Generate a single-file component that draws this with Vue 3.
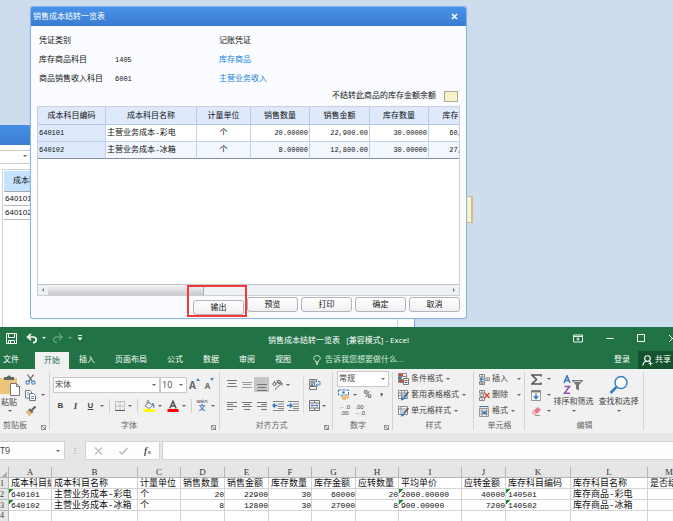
<script setup>
const formRows = [
  { label: '凭证类别', code: '', name: '记账凭证', link: false },
  { label: '库存商品科目', code: '1405', name: '库存商品', link: true },
  { label: '商品销售收入科目', code: '6001', name: '主营业务收入', link: true },
]
const costHeads = ['成本科目编码', '成本科目名称', '计量单位', '销售数量', '销售金额', '库存数量', '库存金额']
const costRows = [
  ['640101', '主营业务成本-彩电', '个', '20.00000', '22,900.00', '30.00000', '60,000.00'],
  ['640102', '主营业务成本-冰箱', '个', '8.00000', '12,800.00', '30.00000', '27,000.00'],
]
const actions = ['输出', '预览', '打印', '确定', '取消']
const tabs = ['文件', '开始', '插入', '页面布局', '公式', '数据', '审阅', '视图']
const letters = ['A', 'B', 'C', 'D', 'E', 'F', 'G', 'H', 'I', 'J', 'K', 'L', 'M']
const sheet = [
  ['成本科目编码', '成本科目名称', '计量单位', '销售数量', '销售金额', '库存数量', '库存金额', '应转数量', '平均单价', '应转金额', '库存科目编码', '库存科目名称', '是否结转'],
  ['640101', '主营业务成本-彩电', '个', '20', '22900', '30', '60000', '20', '2000.00000', '40000', '140501', '库存商品-彩电', ''],
  ['640102', '主营业务成本-冰箱', '个', '8', '12800', '30', '27000', '8', '900.00000', '7200', '140502', '库存商品-冰箱', ''],
  ['', '', '', '', '', '', '', '', '', '', '', '', ''],
]
const textNumber = (r, c) => (r === 1 || r === 2) && [0, 8, 10].includes(c)
const isNumber = (r, c) => r > 0 && [3, 4, 5, 6, 7, 9].includes(c)
</script>

<template>
  <div class="screen">
    <div class="desktop">
      <div class="note"></div>

      <section class="back-window">
        <div class="back-title"></div>
        <div class="back-combo"><i class="caret"></i></div>
        <div class="back-body">
          <table class="back-table">
            <thead><tr><th>成本科目编码</th></tr></thead>
            <tbody>
              <tr><td>640101</td></tr>
              <tr><td>640102</td></tr>
            </tbody>
          </table>
        </div>
      </section>

      <section class="dialog">
        <header class="dialog-title">
          <span>销售成本结转一览表</span>
          <button class="dialog-close" aria-label="关闭">
            <svg width="7" height="7" viewBox="0 0 7 7"><path d="M1 1l5 5M6 1l-5 5" stroke="#fff" stroke-width="1.6" /></svg>
          </button>
        </header>
        <div class="dialog-body">
          <div v-for="r in formRows" :key="r.label" class="form-row">
            <span>{{ r.label }}</span>
            <span class="code">{{ r.code }}</span>
            <a v-if="r.link" href="#">{{ r.name }}</a>
            <span v-else>{{ r.name }}</span>
          </div>
          <div class="legend"><span>不结转此商品的库存金额余额</span><i class="swatch"></i></div>
          <div class="grid-box">
            <div class="grid-view">
              <table class="cost">
                <colgroup>
                  <col class="w68" /><col class="w91" /><col class="w54" /><col class="w59" /><col class="w60" /><col class="w59" /><col class="w60" />
                </colgroup>
                <thead><tr><th v-for="h in costHeads" :key="h">{{ h }}</th></tr></thead>
                <tbody>
                  <tr v-for="row in costRows" :key="row[0]">
                    <td v-for="(c, i) in row" :key="i" :class="{ key: i === 0, mid: i === 2, num: i > 2 }">{{ c }}</td>
                  </tr>
                </tbody>
              </table>
            </div>
            <div class="scroll">
              <button aria-label="向左滚动"><i class="arrow left"></i></button>
              <div class="track"><div class="thumb"></div></div>
              <button aria-label="向右滚动"><i class="arrow right"></i></button>
            </div>
          </div>
          <footer class="actions">
            <button v-for="a in actions" :key="a" :class="{ lowered: a === '输出' }">{{ a }}</button>
          </footer>
        </div>
        <div class="highlight"></div>
      </section>
    </div>

    <section class="excel">
      <header class="bar">
        <div class="quick">
          <button aria-label="保存"><svg width="11" height="11" viewBox="0 0 11 11" fill="none" stroke="#fff"><path d="M0.500 0.500h10v10h-10zM2.500 0.500v4h6v-4M2.500 10.500V7.500h6v3M4.500 8v2.500" /></svg></button>
          <button aria-label="撤消"><svg width="12" height="11" viewBox="0 0 12 11" fill="none" stroke="#fff" stroke-width="1.6"><path d="M5 0.8L1.6 4 5 7.2M2 4h5c2 0 3.3 1 3.3 2.8S9 9.6 7 9.6" /></svg></button>
          <i class="caret light"></i>
          <button class="dim" aria-label="恢复"><svg width="12" height="11" viewBox="0 0 12 11" fill="none" stroke="#8fc0a3" stroke-width="1.3"><path d="M7 0.8L10.4 4 7 7.2M10 4H5C3 4 1.7 5 1.7 6.8S3 9.6 5 9.6" /></svg></button>
          <i class="caret light dim"></i>
          <button class="custom" aria-label="自定义"><svg width="6" height="6" viewBox="0 0 6 6"><path d="M1 0.5h4" stroke="#fff" /><path d="M0.5 2.5h5L3 5.5z" fill="#fff" /></svg></button>
        </div>
        <h1>销售成本结转一览表&nbsp;&nbsp; [兼容模式] - Excel</h1>
        <div class="controls">
          <button aria-label="功能区显示选项"><svg width="10" height="9" viewBox="0 0 10 9" fill="none" stroke="#fff"><path d="M0.5 1h9v7h-9zM0.5 2.5h9M5 7V4M3.5 5.2L5 3.8l1.5 1.4" stroke-width="0.9" /></svg></button>
          <button aria-label="最小化"><svg width="8" height="8" viewBox="0 0 8 8"><path d="M0.5 4.5h7" stroke="#fff" /></svg></button>
          <button aria-label="最大化"><svg width="8" height="8" viewBox="0 0 8 8"><path d="M0.5 0.5h7v7h-7z" fill="none" stroke="#fff" /></svg></button>
          <button aria-label="关闭"><svg width="9" height="9" viewBox="0 0 9 9"><path d="M1 1l7 7M8 1L1 8" stroke="#fff" /></svg></button>
        </div>
      </header>

      <nav class="tabs">
        <button v-for="t in tabs" :key="t" :class="{ file: t === '文件', active: t === '开始' }">{{ t }}</button>
        <button class="tell">
          <svg width="8" height="10" viewBox="0 0 8 10" fill="none" stroke="#e6f2ea" stroke-width="0.9"><path d="M2.7 7V6C1.5 5.200.8 4.300.8 3.300.8 1.700 2.200.6 4 .6s3.200 1.100 3.200 2.700c0 1-.7 1.900-1.900 2.700v1zM2.800 8.300h2.400M3.200 9.500h1.600" /></svg>
          告诉我您想要做什么...
        </button>
        <button class="login">登录</button>
        <button class="share">
          <svg width="11" height="11" viewBox="0 0 11 11" fill="none" stroke="#fff" stroke-width="1.1"><circle cx="5.500" cy="3.600" r="2.800" /><path d="M0.800 10.500c.2-2.200 1.500-3.700 3.200-4.200M7 6.300l1 .8M8.500 6.500v4M6.500 8.500h4" /></svg>
          共享
        </button>
      </nav>

      <div class="ribbon">
        <div class="group clip">
          <div class="tools">
            <button class="paste">
              <svg width="21" height="21" viewBox="0 0 21 21"><path d="M0 3h17v16H0z" fill="#edc47c" /><path d="M4 5V2h3c0-2 4-2 4 0h3v3z" fill="#666" /><path d="M10.500 8.500h6l3 3v9h-9z" fill="#fff" stroke="#777" /><path d="M16.500 8.500v3h3" fill="none" stroke="#777" /></svg>
              <span>粘贴</span><i class="caret"></i>
            </button>
            <div class="stack">
              <button aria-label="剪切"><svg width="11" height="11" viewBox="0 0 11 11" fill="none"><path d="M2.500 0.500l4.800 7M8.500 0.500l-4.800 7" stroke="#666" stroke-width="1.300" /><circle cx="2.600" cy="8.600" r="1.700" stroke="#4a86c5" stroke-width="1.100" /><circle cx="8.400" cy="8.600" r="1.700" stroke="#4a86c5" stroke-width="1.100" /></svg></button>
              <button aria-label="复制"><svg width="11" height="11" viewBox="0 0 11 11" fill="#fff" stroke="#777"><path d="M0.500 0.500h4.500l1.500 1.500v6h-6z" /><path d="M4.500 3.500h4l2 2v5h-6z" /><path d="M2 3h2M2 5h1.500M6 6.500h3M6 8.500h3" stroke="#4a86c5" stroke-width="0.900" /></svg><i class="caret"></i></button>
              <button aria-label="格式刷"><svg width="11" height="11" viewBox="0 0 11 11"><path d="M0.500 6l3-2.500L7 7 4.500 10.500z" fill="#edb96a" /><path d="M4 3l3.700 3.700" stroke="#666" stroke-width="2" /><path d="M6.500 4.500l4-4" stroke="#666" stroke-width="2.200" /></svg></button>
            </div>
          </div>
          <div class="caption"><span>剪贴板</span><i class="launch"></i></div>
        </div>

        <div class="group font">
          <div class="tools">
            <div class="line">
              <label class="pick face"><select aria-label="字体"><option>宋体</option></select><i class="caret"></i></label>
              <label class="pick size"><select aria-label="字号"><option>10</option></select><i class="caret"></i></label>
              <button class="grow" aria-label="增大字号"><b class="big">A</b><svg width="4" height="3" viewBox="0 0 4 3"><path d="M0 3l2-3 2 3z" fill="#4a86c5" /></svg></button>
              <button class="grow" aria-label="减小字号"><b>A</b><svg width="4" height="3" viewBox="0 0 4 3"><path d="M0 0l2 3 2-3z" fill="#4a86c5" /></svg></button>
            </div>
            <div class="line">
              <button class="t15"><b>B</b></button>
              <button class="t15"><b class="ital">I</b></button>
              <button class="t15"><b class="under">U</b></button>
              <i class="caret wide"></i><i class="sep"></i>
              <button class="t13" aria-label="边框"><svg width="10" height="10" viewBox="0 0 10 10" fill="none" stroke="#aaa"><path d="M0.500 0.500h9v9h-9zM5 0.500v9M0.500 5h9" stroke-dasharray="1.500 0.700" /><path d="M0 9.500h10" stroke="#555" /></svg></button>
              <i class="caret wide"></i><i class="sep"></i>
              <button class="t15" aria-label="填充颜色"><svg width="12" height="12" viewBox="0 0 12 12"><path d="M2 5.500l3.500-3.500 4 3.500-3.500 3z" fill="#fff" stroke="#777" /><path d="M4 4V1.200c0-1 2-1 2 0V4" fill="none" stroke="#777" stroke-width="0.800" /><path d="M9 3.500c2 .5 2 2 1.800 4.300" fill="none" stroke="#4a86c5" stroke-width="1.300" /><path d="M0.500 9h11v3h-11z" fill="#ff0" /></svg></button>
              <i class="caret wide"></i>
              <button class="t15" aria-label="字体颜色"><svg width="12" height="12" viewBox="0 0 12 12"><path d="M2.800 8.500L6 1.200l3.200 7.300M4 6h4" fill="none" stroke="#555" stroke-width="1.500" /><path d="M0.500 9h11v3h-11z" fill="#f00" /></svg></button>
              <i class="caret wide"></i><i class="sep"></i>
              <button class="t14 pinyin"><span>wén</span><b>文</b></button>
              <i class="caret wide"></i>
            </div>
          </div>
          <div class="caption"><span>字体</span><i class="launch"></i></div>
        </div>

        <div class="group align">
          <div class="tools">
            <div class="lines">
              <div class="line">
                <button class="t15" aria-label="顶端对齐"><svg width="10" height="12" viewBox="0 0 10 12" stroke="#777"><path d="M0 1.500h10M1 4.500h8M0 7.500h10" /></svg></button>
                <button class="t15" aria-label="垂直居中"><svg width="10" height="12" viewBox="0 0 10 12" stroke="#999"><path d="M0 3.500h10M1 5.500h8M0 8.500h10" /></svg></button>
                <button class="t15 on" aria-label="底端对齐"><svg width="10" height="12" viewBox="0 0 10 12" stroke="#777"><path d="M0 5.500h10M1 8.500h8M0 11.500h10" /></svg></button>
                <button class="t17" aria-label="方向"><svg width="11" height="11" viewBox="0 0 11 11" fill="none" stroke="#666"><circle cx="2.500" cy="5" r="1.600" /><path d="M2 2l3 3.500M4.500 1l3 3.500" /><circle cx="7" cy="3" r="1.500" /><path d="M3 10.500l7-6.500M7.500 4H10v2.500" /></svg></button>
                <i class="caret"></i>
              </div>
              <div class="line">
                <button class="t15" aria-label="左对齐"><svg width="10" height="8" viewBox="0 0 10 8" stroke="#777"><path d="M0 0.500h10M0 2.500h6M0 4.500h10M0 7.500h6" /></svg></button>
                <button class="t15" aria-label="居中"><svg width="10" height="8" viewBox="0 0 10 8" stroke="#777"><path d="M0 0.500h10M2 2.500h6M0 4.500h10M2 7.500h6" /></svg></button>
                <button class="t15" aria-label="右对齐"><svg width="10" height="8" viewBox="0 0 10 8" stroke="#777"><path d="M0 0.500h10M4 2.500h6M0 4.500h10M4 7.500h6" /></svg></button>
                <button class="t17" aria-label="减少缩进量"><svg width="12" height="10" viewBox="0 0 12 10"><path d="M1 0.500h11M6 3h6M6 5.500h6M1 9.500h11M6 7.500h6" stroke="#888" /><path d="M5.500 4.500H1M3 2.500L1 4.500l2 2" stroke="#3a78bd" stroke-width="1.400" fill="none" /></svg></button>
                <button class="t13" aria-label="增加缩进量"><svg width="12" height="10" viewBox="0 0 12 10"><path d="M1 0.500h11M6 3h6M6 5.500h6M1 9.500h11M6 7.500h6" stroke="#888" /><path d="M0 4.500h4.500M3 2.500l2 2-2 2" stroke="#3a78bd" stroke-width="1.400" fill="none" /></svg></button>
              </div>
            </div>
            <div class="lines side">
              <div class="line"><button class="t15" aria-label="自动换行"><svg width="12" height="11" viewBox="0 0 12 11" fill="none"><path d="M0.500 0.500h7v2.500h-7zM0.500 4h5v2.500h-5zM0.500 7.500h7v3h-7z" stroke="#777" /><path d="M2 2h4M2 5.500h2" stroke="#4a86c5" /><path d="M9 2.500h2v3.500H7M8.500 4.500L7 6l1.500 1.500" stroke="#4a86c5" /></svg></button></div>
              <div class="line"><button class="t15" aria-label="合并后居中"><svg width="11" height="11" viewBox="0 0 11 11" fill="none"><path d="M0.500 0.500h10v10h-10zM0.500 3h10M0.500 8h10M5.500 0.500V3M5.500 8v2.500" stroke="#777" /><path d="M2 5.500h7M3.500 4.300L2 5.500l1.500 1.200M7.500 4.300L9 5.500 7.500 6.700" stroke="#3a78bd" stroke-width="0.900" /></svg></button><i class="caret"></i></div>
            </div>
          </div>
          <div class="caption"><span>对齐方式</span><i class="launch"></i></div>
        </div>

        <div class="group number">
          <div class="tools">
            <label class="pick format"><select aria-label="数字格式"><option>常规</option></select><i class="caret"></i></label>
            <div class="line">
              <button class="t14" aria-label="会计数字格式"><svg width="12" height="11" viewBox="0 0 12 11"><path d="M0.500 1h10v5h-10z" fill="#fff" stroke="#3a78bd" stroke-dasharray="3 1" /><circle cx="5.500" cy="3.500" r="1.300" fill="#3a78bd" /><path d="M3 8h4M4 10h4M7 6.500h4M7 8.500h4" stroke="#e8b05c" stroke-width="1.300" /></svg></button>
              <i class="caret wide"></i>
              <button class="t15 pct">%</button>
              <button class="t13 comma">,</button>
            </div>
            <div class="line">
              <button class="t15 dec"><span><em>←</em>.0</span><span>.00</span></button>
              <button class="t15 dec"><span>.00</span><span><em>→</em>.0</span></button>
            </div>
          </div>
          <div class="caption"><span>数字</span><i class="launch"></i></div>
        </div>

        <div class="group rows">
          <div class="tools">
            <button><svg width="11" height="12" viewBox="0 0 11 12"><path d="M0.500 0.500h8v9h-8zM0.500 3.500h8M0.500 6.500h8M3.500 0.500v9" fill="#fff" stroke="#888" /><path d="M1 1h4v2H1z" fill="#d9452c" /><path d="M1 4h2v2H1z" fill="#3a78bd" /><path d="M1 7h4v2H1z" fill="#d9452c" /><path d="M5.500 5.500h5v6h-5z" fill="#fff" stroke="#777" /><path d="M6.500 7.500h3M6.500 9.500h3" stroke="#555" /></svg>条件格式<i class="caret"></i></button>
            <button><svg width="11" height="11" viewBox="0 0 11 11"><path d="M0.500 0.500h9v8h-9zM0.500 3h9M0.500 5.500h9M3.500 0.500v8M6.500 0.500v8" fill="#fff" stroke="#888" /><path d="M4 3h5.500v5H4z" fill="#9dc3e6" /><path d="M10.500 2L6 7.500" stroke="#555" stroke-width="1.500" /><path d="M2.500 10.500l1.500-3 2.500.5-1 2z" fill="#3a78bd" /></svg>套用表格格式<i class="caret"></i></button>
            <button><svg width="11" height="11" viewBox="0 0 11 11"><path d="M0.500 0.500h9v8h-9zM0.500 3h9M3 0.500v8" fill="#fff" stroke="#888" /><path d="M3.500 3.500h5v4h-5z" fill="#bcd6ef" /><path d="M10.500 2L6 7.500" stroke="#555" stroke-width="1.500" /><path d="M2.500 10.500l1.500-3 2.500.5-1 2z" fill="#3a78bd" /></svg>单元格样式<i class="caret"></i></button>
          </div>
          <div class="caption"><span>样式</span></div>
        </div>

        <div class="group rows cells">
          <div class="tools">
            <button><svg width="11" height="11" viewBox="0 0 11 11" fill="none"><path d="M0.500 0.500h5v2.500h-5zM3 0.500V3M0.500 7.500h5v3h-5zM3 7.500v3M0.500 9h5" stroke="#888" /><path d="M5.500 4h5v2.500h-5zM8 4v2.500" stroke="#888" /><path d="M5 5.200H1M2.700 3.600L1 5.200l1.700 1.600" stroke="#3a78bd" stroke-width="1.200" /></svg>插入<i class="caret far"></i></button>
            <button><svg width="11" height="11" viewBox="0 0 11 11" fill="none"><path d="M0.500 0.500h5v2.500h-5zM3 0.500V3M0.500 7.500h5v3h-5zM3 7.500v3M1 4h3.500v2.500H1z" stroke="#888" /><path d="M5.500 3l5 5M10.500 3l-5 5" stroke="#e0452c" stroke-width="1.400" /></svg>删除<i class="caret far"></i></button>
            <button><svg width="11" height="11" viewBox="0 0 11 11" fill="none"><path d="M0.500 2.500h9v8h-9zM3 2.500v8M7.500 2.500v8M0.500 5h9M0.500 8h9" stroke="#999" /><path d="M3.500 5.500h4v2.500h-4z" fill="#3a78bd" /><path d="M1 0.500h8M1 0v1.500M9 0v1.500" stroke="#3a78bd" /></svg>格式<i class="caret"></i></button>
          </div>
          <div class="caption"><span>单元格</span></div>
        </div>

        <div class="group edit">
          <div class="tools">
            <div class="stack">
              <button aria-label="自动求和"><svg width="11" height="11" viewBox="0 0 11 11"><path d="M10 2.500V1H1l4.500 4.500L1 10h9V8.500" fill="none" stroke="#555" stroke-width="1.600" /></svg><i class="caret"></i></button>
              <button aria-label="填充"><svg width="11" height="11" viewBox="0 0 11 11" fill="#fff"><path d="M0.500 0.500h9v10h-9z" stroke="#999" /><path d="M0.500 1.500h9" stroke="#777" stroke-width="2" /><path d="M5 3.500v5M2.700 6.300L5 8.600l2.300-2.300" fill="none" stroke="#3a78bd" stroke-width="1.500" /></svg><i class="caret"></i></button>
              <button aria-label="清除"><svg width="11" height="10" viewBox="0 0 11 10"><path d="M1 6l6-5 3 3-5.500 5H2.500z" fill="#e8798b" /><path d="M1 6l2-1.500L6 7.500 4.500 9H2.500z" fill="#f4b5bf" /><path d="M4 9.500h5" stroke="#999" /></svg><i class="caret"></i></button>
            </div>
            <button class="tall">
              <svg width="21" height="20" viewBox="0 0 21 20" fill="none"><path d="M1 8L4 0.800 7 8M2.200 5.500h3.600" stroke="#3a78bd" stroke-width="1.500" /><path d="M1.500 11.500h5L1.500 18.200H7" stroke="#9b4fb5" stroke-width="1.500" /><path d="M8.500 5h12l-4.500 5v5.500l-3-1.500v-4z" fill="#777" /><path d="M11 6.500h7" stroke="#ccc" /></svg>
              <span>排序和筛选</span><i class="caret"></i>
            </button>
            <button class="tall">
              <svg width="20" height="20" viewBox="0 0 20 20" fill="none"><circle cx="12" cy="7.500" r="6" fill="#fff" stroke="#3a7fc4" stroke-width="1.500" /><path d="M7.500 12L1.500 18" stroke="#3a7fc4" stroke-width="2.600" /></svg>
              <span>查找和选择</span><i class="caret"></i>
            </button>
          </div>
          <div class="caption"><span>编辑</span></div>
        </div>
      </div>

      <div class="formula">
        <label class="namebox"><input value="T9" aria-label="名称框" /><i class="caret"></i></label>
        <i class="dots">⋮</i>
        <div class="fx">
          <button aria-label="取消"><svg width="9" height="8" viewBox="0 0 9 8"><path d="M1 0.500l7 7M8 0.500l-7 7" stroke="#bbb" stroke-width="1.200" /></svg></button>
          <button aria-label="输入"><svg width="9" height="8" viewBox="0 0 9 8"><path d="M0.500 4.500l2.500 2.500L8.500 1" fill="none" stroke="#bbb" stroke-width="1.500" /></svg></button>
          <button class="fn">f<small>x</small></button>
        </div>
        <input class="entry" aria-label="编辑栏" />
      </div>

      <div class="sheet">
        <table>
          <colgroup>
            <col class="c9" /><col class="c43" /><col class="c86" /><col class="c43" /><col class="c44" /><col class="c44" /><col class="c43" /><col class="c44" /><col class="c43" /><col class="c63" /><col class="c44" /><col class="c65" /><col class="c77" /><col class="c43" />
          </colgroup>
          <thead>
            <tr><th><i class="corner"></i></th><th v-for="l in letters" :key="l">{{ l }}</th></tr>
          </thead>
          <tbody>
            <tr v-for="(row, r) in sheet" :key="r">
              <th>{{ r + 1 }}</th>
              <td v-for="(c, i) in row" :key="i" :class="{ num: isNumber(r, i), mark: textNumber(r, i) }">{{ c }}</td>
            </tr>
          </tbody>
        </table>
      </div>
    </section>
  </div>
</template>

<style>
body { margin: 0; }
</style>

<style scoped>
* { box-sizing: border-box; }
.screen {
  display: flex; flex-direction: column; height: 100vh; overflow: hidden;
  background: #cedded; color: #111; font: 8px/12px "Liberation Sans", "Noto Sans CJK SC", sans-serif;
}
button, input, select { font: inherit; color: inherit; border: 0; padding: 0; margin: 0; background: none; border-radius: 0; min-width: 0; }
button { display: flex; align-items: center; justify-content: center; white-space: nowrap; }
svg { display: block; flex: none; }
table { border-collapse: separate; border-spacing: 0; table-layout: fixed; }
th { font-weight: normal; }
.caret { flex: none; width: 0; height: 0; border: 2px solid transparent; border-top-color: #666; border-bottom: 0; }
.caret.light { border-top-color: #fff; }
.caret.wide { margin: 0 3px 0 2px; }

.desktop { position: relative; flex: none; height: 327px; overflow: hidden; }
.note { position: absolute; left: 440px; top: 196px; width: 33px; height: 27px; background: #fdf1c6; border: 1px solid #cdbd94; border-right-width: 2px; }

.back-window { position: absolute; left: 0; top: 125px; width: 415px; height: 202px; background: #fff; border-right: 1px solid #77a7e0; }
.back-title { height: 20px; background: linear-gradient(#468fe4, #3a7dd2); }
.back-combo { margin-top: 5px; height: 14px; border: solid #ccc; border-width: 1px 0; padding: 5px 0 0 23px; }
.back-body { margin: 5px 16px 0 2px; border: 1px solid #ccd3dc; border-bottom: 0; height: 158px; padding: 1px 0 0 1px; }
.back-table { width: 66px; }
.back-table th { height: 21px; background: #c5e2ff; border-bottom: 1px solid #aaa; padding: 0; }
.back-table td { height: 14px; border-bottom: 1px solid #bbb; padding: 0 1px; line-height: 10px; }

.dialog { position: absolute; left: 30px; top: 6px; width: 437px; height: 313px; display: flex; flex-direction: column; background: #fbfcff; border: 1px solid #89b5ea; border-radius: 3px; box-shadow: 0 0 1px #7fa9db; }
.dialog-title { flex: none; display: flex; align-items: center; justify-content: space-between; height: 19px; padding: 0 8px 0 2px; color: #fff; background: linear-gradient(#4892e8, #3a7cd0); border-radius: 2px 2px 0 0; }
.dialog-body { flex: 1; display: flex; flex-direction: column; padding: 5px 6px 0; }
.form-row { display: grid; grid-template-columns: 76px 104px 1fr; align-items: center; height: 19px; padding-left: 2px; }
.form-row a { color: #1480e0; text-decoration: none; }
.code { font: 7px/12px "Liberation Mono", monospace; }
.legend { display: flex; align-items: center; justify-content: flex-end; gap: 8px; height: 16px; margin-bottom: 2px; padding-right: 2px; }
.swatch { width: 14px; height: 11px; background: #f8f2c8; border: 1px solid #aaa99a; }
.grid-box { flex: none; display: flex; flex-direction: column; height: 190px; border: 1px solid #cbd0d8; background: #fff; }
.grid-view { flex: 1; overflow: hidden; }
.cost { width: 451px; font-family: "Liberation Mono", "Noto Sans CJK SC", monospace; }
.w54 { width: 54px; } .w59 { width: 59px; } .w60 { width: 60px; } .w68 { width: 68px; } .w91 { width: 91px; }
.cost th { height: 18px; padding: 0; background: #deeafc; border: solid #b5cbe6; border-width: 0 1px 1px 0; }
.cost td { height: 17px; padding: 0 1px; border: solid #bfd2ea; border-width: 0 1px 1px 0; white-space: nowrap; line-height: 12px; }
.cost tr:nth-child(2) td { background: #f2f7fe; border-bottom-color: #8591a3; }
.cost tbody td.key { background: #deeafc; font-size: 7px; }
.cost td.mid { text-align: center; }
.cost td.num { text-align: right; font-size: 7px; }
.scroll { display: flex; height: 11px; border-top: 1px solid #bfc3c9; background: #eef1f4; }
.scroll button { width: 10px; }
.arrow { width: 0; height: 0; border: 2px solid transparent; }
.arrow.left { border-right-color: #73808f; border-left: 0; }
.arrow.right { border-left-color: #73808f; border-right: 0; }
.track { flex: 1; }
.thumb { width: 39%; height: 100%; background: linear-gradient(#f5f5f7, #c9cacf); border-right: 1px solid #aaa; }
.actions { display: flex; justify-content: flex-end; align-items: flex-start; gap: 3px; padding-top: 1px; }
.actions button { width: 51px; height: 15px; border: 1px solid #b4b4b8; border-radius: 3px; background: linear-gradient(#fff, #f0f0f2); }
.actions .lowered { margin-top: 3px; }
.highlight { position: absolute; left: 156px; top: 278px; width: 60px; height: 32px; border: 2px solid #f23a3a; pointer-events: none; }

.excel { flex: 1; display: flex; flex-direction: column; min-height: 0; background: #e6e6e6; color: #444; }
.bar { display: grid; grid-template-columns: 1fr auto 1fr; align-items: center; height: 24px; background: #217346; color: #fff; }
.quick { display: flex; align-items: center; gap: 4px; padding: 0 0 2px 6px; }
.quick button:nth-child(2) { margin-left: 5px; }
.quick button.dim { margin-left: 2px; opacity: 0.6; }
.caret.dim { opacity: 0.4; }
.quick .custom { margin-left: 1px; }
.bar h1 { margin: 0; font: inherit; font-family: "Open Sans", "Noto Sans CJK SC", sans-serif; padding: 1px 0 0 4px; }
.controls { display: flex; justify-content: flex-end; gap: 23px; padding-bottom: 2px; margin-right: -4px; }
.tabs { display: flex; height: 18px; background: #217346; color: #fff; }
.tabs button { padding: 0 10px; }
.tabs .file { padding: 0 16px 0 3px; }
.tabs .active { padding: 0 9px; background: #f1f1f1; color: #217346; margin-top: 1px; }
.tabs .tell { padding: 0 0 0 12px; gap: 4px; color: #d8eadf; }
.tabs .login { margin-left: auto; padding: 0 8px; }
.tabs .share { background: #15532f; padding: 0 2px 0 4px; gap: 2px; }

.ribbon { display: grid; grid-template-columns: 50fr 170fr 113fr 60fr 81fr 51fr 119fr 29fr; height: 64px; background: #f1f1f1; }
.group { display: flex; flex-direction: column; position: relative; min-width: 0; background: linear-gradient(#d4d4d4, #d4d4d4) right 3px / 1px 58px no-repeat; }
.tools { flex: 1; min-height: 0; }
.caption { display: flex; align-items: center; justify-content: center; height: 14px; color: #666; }
.launch { position: absolute; right: 4px; bottom: 3px; width: 5px; height: 5px; border: solid #999; border-width: 1px 0 0 1px; }
.launch::after { content: ""; position: absolute; right: 0; bottom: 0; width: 3px; height: 3px; background: linear-gradient(45deg, transparent 40%, #888 40%, #888 60%, transparent 60%); border: solid #888; border-width: 0 1px 1px 0; }
.line { display: flex; align-items: center; height: 15px; }
.t13 { width: 13px; height: 15px; } .t14 { width: 14px; height: 15px; } .t15 { width: 15px; height: 15px; } .t17 { width: 17px; height: 15px; }
.stack { display: flex; flex-direction: column; padding-top: 2px; }
.stack button { height: 16px; gap: 5px; justify-content: flex-start; }
.clip .tools { display: flex; gap: 5px; }
.clip .caption { padding-right: 20px; }
.paste { flex-direction: column; justify-content: flex-start; padding-top: 6px; width: 20px; }
.paste span { margin: 1px 2px 2px 0; line-height: 11px; }
.font .tools { padding: 8px 0 0 3px; display: flex; flex-direction: column; gap: 6px; }
.font .caption { padding-right: 12px; }
.pick { display: flex; align-items: center; height: 16px; background: #fff; border: 1px solid #c8c8c8; padding-right: 3px; }
.pick select { flex: 1; appearance: none; padding-left: 1px; height: 14px; outline: 0; }
.face { width: 107px; } .size { width: 27px; font-size: 9px; }
.size select { font-family: "Open Sans", sans-serif; }
.grow { width: 15px; height: 14px; align-items: flex-start; }
.grow b { font: bold 8px/15px "Open Sans", sans-serif; color: #666; }
.grow b.big { font-size: 10px; }
b { color: #444; }
.ital { font-family: "Liberation Serif", serif; font-style: italic; font-size: 9px; }
.under { text-decoration: underline; }
.sep { flex: none; width: 1px; height: 14px; margin: 0 3px 0 2px; background: #d0d0d0; }
.pinyin { flex-direction: column; }
.pinyin span { font-size: 6px; line-height: 5px; }
.pinyin b { font-size: 7px; line-height: 8px; color: #3a78bd; }
.align .tools { display: flex; padding: 8px 0 0 4px; }
.align .caption { padding-right: 10px; }
.lines { display: flex; flex-direction: column; gap: 6px; width: 79px; height: 36px; }
.lines.side { width: 28px; padding-left: 3px; border-left: 1px solid #d8d8d8; }
.on { background: #c6c6c6; }
.number .tools { padding: 2px 4px 0; }
.number .caption { padding-right: 10px; }
.format { width: 52px; }
.pct { font: 11px/14px Roboto, sans-serif; }
.comma { font: bold 12px/8px "Liberation Serif", serif; padding-bottom: 7px; }
.dec { flex-direction: column; font-size: 6px; line-height: 6px; }
.dec em { font-style: normal; color: #3a78bd; }
.rows .tools { padding: 2px 0 0 5px; display: flex; flex-direction: column; }
.rows button { height: 16px; gap: 2px; justify-content: flex-start; }
.rows .caret { margin-left: 1px; }
.rows .caret.far { margin-left: 7px; }
.edit .tools { display: flex; gap: 4px; padding-left: 6px; }
.edit .stack { width: 18px; }
.tall { flex-direction: column; justify-content: flex-start; padding-top: 6px; width: 41px; }
.tall span { margin: 1px 0 2px; line-height: 12px; }

.formula { display: flex; height: 19px; margin: 8px 0 7px; }
.namebox { display: flex; align-items: center; width: 65px; background: #fdfdfd; border: solid #d0d0d0; border-width: 1px 1px 1px 0; padding-right: 4px; }
.namebox input { flex: 1; font: 9px/12px "Open Sans", sans-serif; outline: 0; }
.dots { width: 20px; text-align: center; font-style: normal; line-height: 19px; color: #999; }
.fx { display: flex; justify-content: space-around; width: 75px; background: #fdfdfd; border: 1px solid #d4d4d4; }
.fn { font: italic bold 10px/14px "Liberation Serif", serif; color: #555; }
.fn small { font-size: 7px; padding-top: 3px; }
.entry { flex: 1; margin-left: 2px; background: #fdfdfd; border: 1px solid #d4d4d4; border-right: 0; outline: 0; }
.sheet { flex: 1; min-height: 0; overflow: hidden; background: #fff; }
.sheet table { width: 691px; font: 9px/8px "Liberation Mono", "Noto Sans CJK SC", monospace; color: #111; }
.c9 { width: 9px; } .c43 { width: 43px; } .c44 { width: 44px; } .c63 { width: 63px; } .c65 { width: 65px; } .c77 { width: 77px; } .c86 { width: 86px; }
.sheet th, .sheet td { height: 11px; padding: 2px 0 0 2px; vertical-align: baseline; overflow: hidden; white-space: nowrap; border: solid #d4d4d4; border-width: 0 1px 1px 0; }
.sheet th { background: #e6e6e6; font: 9px/8px "Liberation Serif", serif; color: #333; border-color: #b5b5b5; padding: 1px 0 0; }
.sheet tbody th { text-align: left; font-size: 8px; }
.sheet td.num { text-align: right; font-size: 8px; padding-left: 0; }
.sheet td.mark { font-size: 8px; background: linear-gradient(135deg, #1a8a2a 3px, transparent 3px) no-repeat; }
.sheet thead th:first-child { vertical-align: bottom; }
.corner { display: block; margin-left: 2px; width: 5px; height: 5px; background: linear-gradient(135deg, transparent 50%, #b0b0b0 50%); }
</style>
